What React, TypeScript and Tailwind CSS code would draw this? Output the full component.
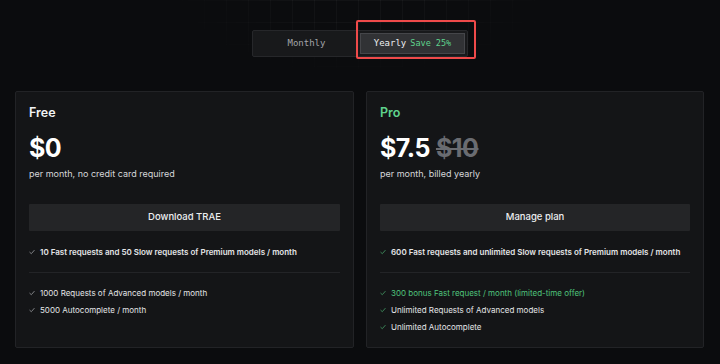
import { useState } from 'react';

type Feature = { text: string; strong?: boolean; accent?: boolean };

type Plan = {
  name: string;
  price: string;
  oldPrice?: string;
  note: string;
  cta: string;
  pro?: boolean;
  main: Feature;
  extras: Feature[];
};

const plans: Plan[] = [
  {
    name: 'Free',
    price: '$0',
    note: 'per month, no credit card required',
    cta: 'Download TRAE',
    main: { text: '10 Fast requests and 50 Slow requests of Premium models / month', strong: true },
    extras: [
      { text: '1000 Requests of Advanced models / month' },
      { text: '5000 Autocomplete / month' },
    ],
  },
  {
    name: 'Pro',
    price: '$7.5',
    oldPrice: '$10',
    note: 'per month, billed yearly',
    cta: 'Manage plan',
    pro: true,
    main: { text: '600 Fast requests and unlimited Slow requests of Premium models / month', strong: true },
    extras: [
      { text: '300 bonus Fast request / month (limited-time offer)', accent: true },
      { text: 'Unlimited Requests of Advanced models' },
      { text: 'Unlimited Autocomplete' },
    ],
  },
];

const Tick = ({ green }: { green?: boolean }) => (
  <svg width="6" height="6" viewBox="0 0 6 6" className="shrink-0">
    <path
      d="M0.8 3.3 L2.3 4.7 L5.2 1.4"
      fill="none"
      stroke={green ? '#3f8f5f' : '#8b8d91'}
      strokeWidth="0.9"
      strokeLinecap="round"
      strokeLinejoin="round"
    />
  </svg>
);

const FeatureRow = ({ f, pro }: { f: Feature; pro?: boolean }) => (
  <li className="flex items-center gap-[5px] h-[12px]">
    <Tick green={pro} />
    <span
      className={`text-[8px] leading-[12px] whitespace-nowrap ${
        f.accent ? 'text-[#4fc47c]' : 'text-[#e4e5e7]'
      } ${f.strong ? 'font-semibold' : 'font-normal'}`}
    >
      {f.text}
    </span>
  </li>
);

const PlanCard = ({ plan }: { plan: Plan }) => (
  <div className="min-w-0 h-[257px] border border-[#222326] bg-[#141517] rounded-[2px] px-[13px] pt-[12px] flex flex-col">
    <div className={`text-[12.5px] leading-[18px] font-semibold ${plan.pro ? 'text-[#5fd38d]' : 'text-[#f2f3f5]'}`}>
      {plan.name}
    </div>
    <div className="mt-[11px] flex items-baseline gap-[6px] text-[25px] leading-[30px] font-bold tracking-[-0.5px]">
      <span className="text-white">{plan.price}</span>
      {plan.oldPrice && <span className="text-[#6a6c71] line-through decoration-[2px]">{plan.oldPrice}</span>}
    </div>
    <div className="mt-[4px] text-[9px] leading-[14px] text-[#d6d7da]">{plan.note}</div>
    <button className="mt-[23px] h-[27px] w-full bg-[#242527] text-[9.5px] font-medium text-[#eceef0] rounded-[1px]">
      {plan.cta}
    </button>
    <ul className="mt-[15px]">
      <FeatureRow f={plan.main} pro={plan.pro} />
    </ul>
    <div className="mt-[14px] h-px bg-[#232427]" />
    <ul className="mt-[14px] flex flex-col gap-[5px]">
      {plan.extras.map((f) => (
        <FeatureRow key={f.text} f={f} pro={plan.pro} />
      ))}
    </ul>
  </div>
);

export default function App() {
  const [yearly, setYearly] = useState(true);

  return (
    <div
      className="relative w-[720px] h-[364px] overflow-hidden bg-[#0b0c0e]"
      style={{ fontFamily: 'Inter, "Noto Sans", sans-serif' }}
    >
      <div className="absolute left-[160px] top-0 w-[400px] h-[80px] bg-[linear-gradient(to_right,#ffffff08_1px,transparent_1px),linear-gradient(to_bottom,#ffffff08_1px,transparent_1px)] bg-[size:22px_22px] [mask-image:radial-gradient(ellipse_at_top,black_20%,transparent_70%)]" />

      <div className="relative flex justify-center pt-[30px]">
        <div
          className="flex h-[27px] w-[216px] p-[2px] gap-[2px] bg-[#18191b] border border-[#26272a] rounded-[2px]"
          style={{ fontFamily: '"DejaVu Sans Mono", "Liberation Mono", monospace' }}
        >
          <button
            onClick={() => setYearly(false)}
            className={`flex-1 flex items-center justify-center text-[9px] font-medium ${
              yearly ? 'text-[#a3a5a9]' : 'bg-[#333437] text-[#e6e7e9]'
            }`}
          >
            Monthly
          </button>
          <button
            onClick={() => setYearly(true)}
            className={`relative flex-1 flex items-center justify-center gap-[4px] text-[9px] font-medium border ${
              yearly ? 'bg-[#313235] border-[#45464a] text-[#eeeff1]' : 'border-transparent text-[#a3a5a9]'
            }`}
          >
            <span>Yearly</span>
            <span className="text-[8.5px] text-[#5fd38d]">Save 25%</span>
            <span className="absolute -left-[5px] -right-[12px] -top-[14px] -bottom-[6px] border-2 border-[#ef4a4a] rounded-[2px] pointer-events-none" />
          </button>
        </div>
      </div>

      <div className="relative grid grid-cols-[339px_338px] gap-[12px] px-[15px] mt-[34px]">
        {plans.map((p) => (
          <PlanCard key={p.name} plan={p} />
        ))}
      </div>
    </div>
  );
}
